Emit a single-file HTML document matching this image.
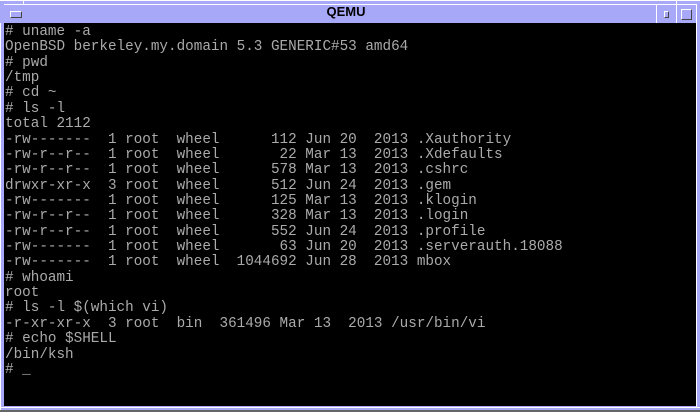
<!DOCTYPE html>
<html><head><meta charset="utf-8"><style>
html,body{margin:0;padding:0;width:700px;height:412px;overflow:hidden;background:#a8a8f8;}
.win{position:absolute;left:0;top:0;width:700px;height:412px;background:#a8a8f8;}
.tb{position:absolute;left:4px;top:4px;width:692px;height:19px;background:#a8a8f8;border-top:1px solid #fff;}
.title{position:absolute;left:0;width:692px;top:4px;text-align:center;font:bold 13px "Liberation Sans",sans-serif;color:#000;}
.btn{position:absolute;top:4px;height:19px;border-left:1px solid #fff;border-right:1px solid #fff;}
.term{position:absolute;left:4px;top:23px;width:692px;height:383px;background:#000;}
pre{margin:0;position:absolute;left:1px;top:2px;font-family:"Liberation Mono",monospace;font-size:14.3px;line-height:15.36px;color:#aaa;}
</style></head><body><div class="win">
<div style="position:absolute;left:0;top:0;width:700px;height:1px;background:#fff"></div>
<div style="position:absolute;left:23px;top:0;width:1px;height:23px;background:#fff"></div>
<div style="position:absolute;left:676px;top:0;width:1px;height:23px;background:#fff"></div>
<div class="tb"></div>
<div class="title">QEMU</div>
<div style="position:absolute;left:10px;top:11px;width:10px;height:5px;border:1px solid #fff;border-right-color:#444;border-bottom-color:#444"></div>
<div class="btn" style="left:656px;width:19px"></div>
<div style="position:absolute;left:664px;top:11px;width:3px;height:5px;border:1px solid #fff;border-right-color:#444;border-bottom-color:#444"></div>
<div style="position:absolute;left:681px;top:9px;width:9px;height:9px;border:1px solid #fff;border-right-color:#444;border-bottom-color:#444"></div>
<div style="position:absolute;left:696px;top:4px;width:1px;height:404px;background:#fff"></div>
<div style="position:absolute;left:0;top:23px;width:1px;height:389px;background:#fff"></div>
<div style="position:absolute;left:0;top:407px;width:700px;height:1px;background:#fff"></div>
<div style="position:absolute;left:0;top:410px;width:700px;height:2px;background:#666"></div>
<div class="term"><pre># uname -a
OpenBSD berkeley.my.domain 5.3 GENERIC#53 amd64
# pwd
/tmp
# cd ~
# ls -l
total 2112
-rw-------  1 root  wheel      112 Jun 20  2013 .Xauthority
-rw-r--r--  1 root  wheel       22 Mar 13  2013 .Xdefaults
-rw-r--r--  1 root  wheel      578 Mar 13  2013 .cshrc
drwxr-xr-x  3 root  wheel      512 Jun 24  2013 .gem
-rw-------  1 root  wheel      125 Mar 13  2013 .klogin
-rw-r--r--  1 root  wheel      328 Mar 13  2013 .login
-rw-r--r--  1 root  wheel      552 Jun 24  2013 .profile
-rw-------  1 root  wheel       63 Jun 20  2013 .serverauth.18088
-rw-------  1 root  wheel  1044692 Jun 28  2013 mbox
# whoami
root
# ls -l $(which vi)
-r-xr-xr-x  3 root  bin  361496 Mar 13  2013 /usr/bin/vi
# echo $SHELL
/bin/ksh
# _</pre></div>
</div></body></html>
